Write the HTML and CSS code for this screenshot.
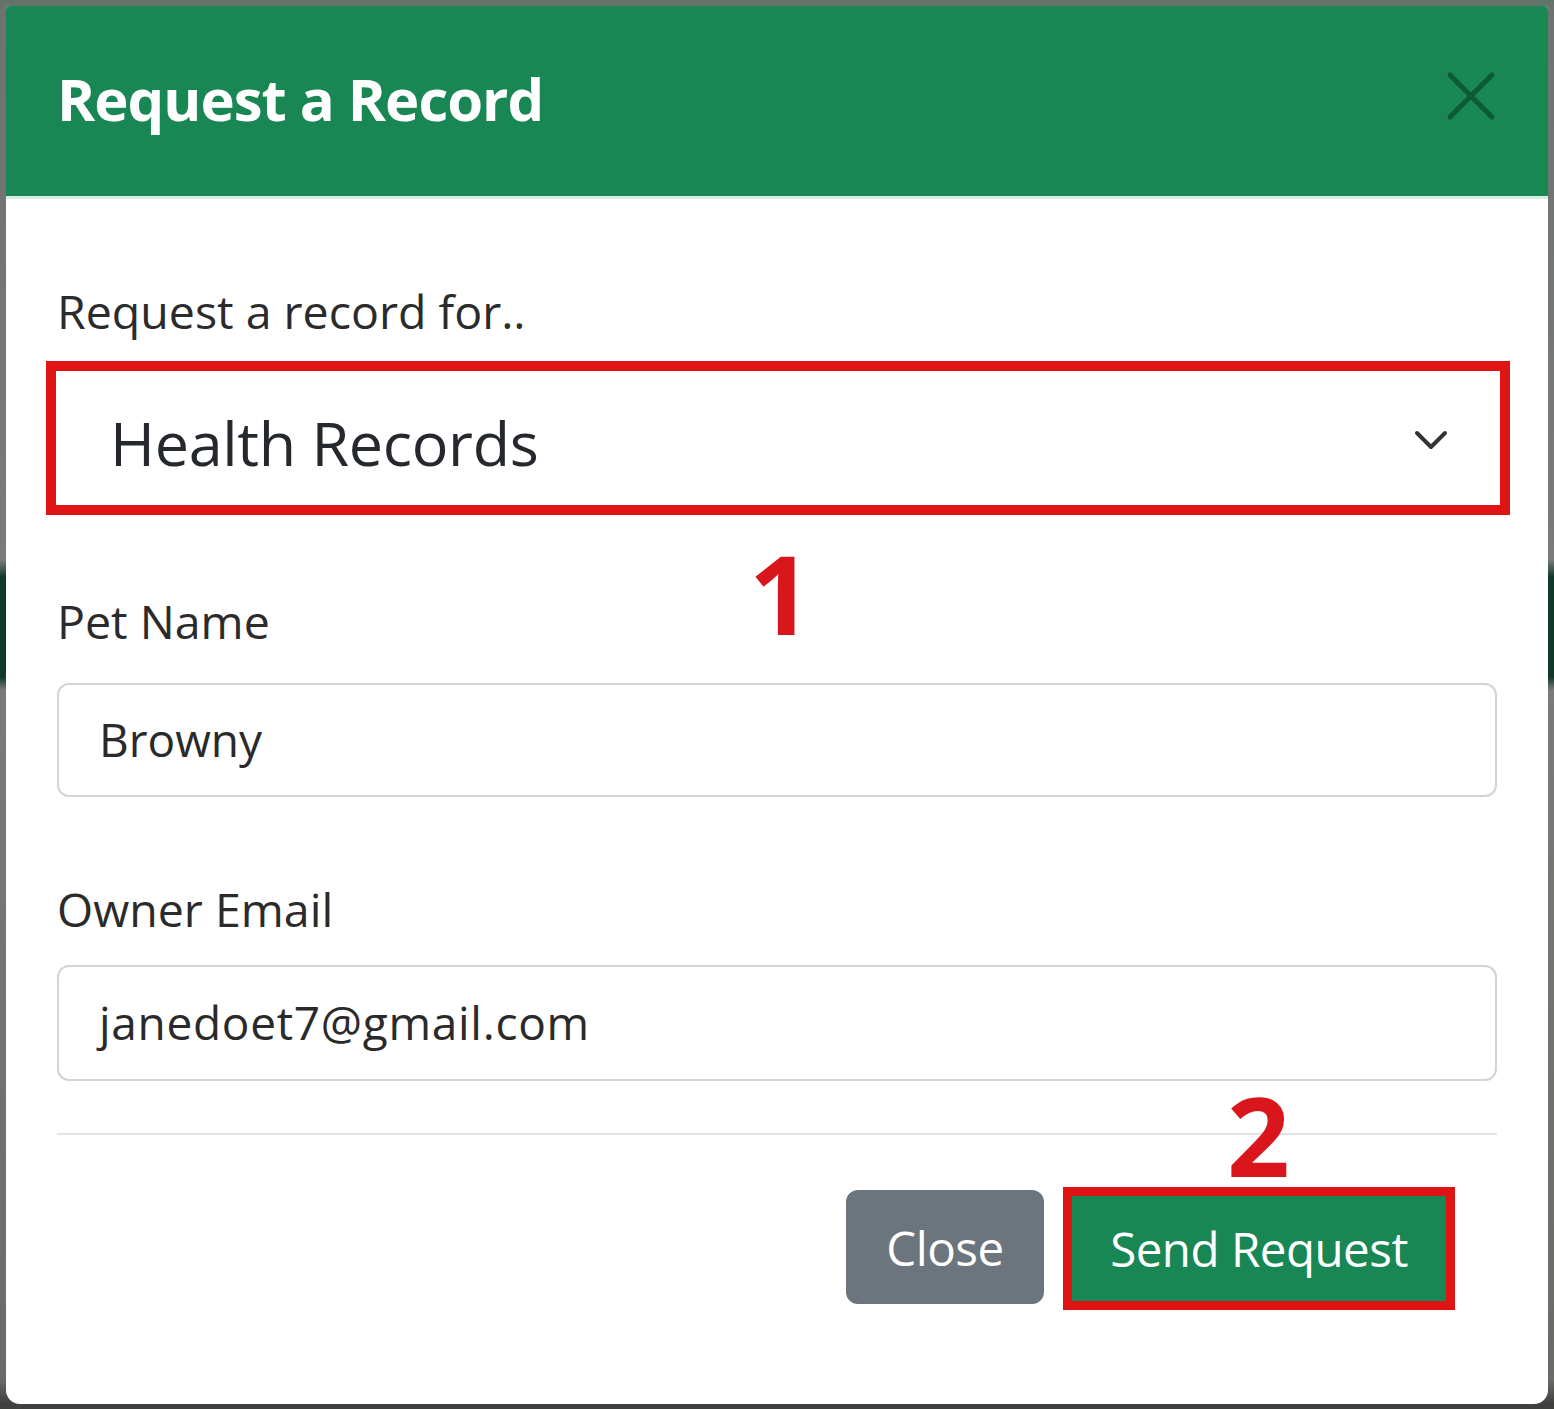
FILE: index.html
```html
<!DOCTYPE html>
<html lang="en">
<head>
<meta charset="utf-8">
<title>Request a Record</title>
<link rel="stylesheet" href="styles.css">
</head>
<body>
<div class="modal">
  <div class="modal-header">
    <h5 class="modal-title">Request a Record</h5>
    <button class="btn-close" aria-label="Close">
      <svg viewBox="0 0 50 50" width="50" height="50"><path d="M4 4 L46 46 M46 4 L4 46" stroke="currentColor" stroke-width="5" stroke-linecap="round" fill="none"/></svg>
    </button>
  </div>
  <div class="modal-body">
    <div class="field">
      <label class="form-label">Request a record for..</label>
      <div class="mark-box">
        <div class="form-select">
          <span>Health Records</span>
          <svg class="chevron" viewBox="0 0 34 22" width="34" height="22"><path d="M3 4 L17 18 L31 4" stroke="#333" stroke-width="4" stroke-linecap="round" stroke-linejoin="round" fill="none"/></svg>
        </div>
      </div>
      <span class="mark-num num-1">1</span>
    </div>
    <div class="field">
      <label class="form-label">Pet Name</label>
      <div class="form-control">Browny</div>
    </div>
    <div class="field">
      <label class="form-label">Owner Email</label>
      <div class="form-control email">janedoet7@gmail.com</div>
    </div>
  </div>
  <div class="modal-footer">
    <button class="btn btn-secondary">Close</button>
    <div class="mark-btn">
      <span class="mark-num num-2">2</span>
      <button class="btn btn-success">Send Request</button>
    </div>
  </div>
</div>
</body>
</html>
```
FILE: styles.css
```css
html, body {
  margin: 0;
  padding: 0;
}
body {
  width: 1554px;
  height: 1409px;
  overflow: hidden;
  background: linear-gradient(to bottom, #5f7468 0, #6e7270 8px, #7a7a7a 560px, #12382a 577px, #12382a 677px, #7a7a7a 690px, #6a6a66 1380px, #3f413f 1404px);
  font-family: "Open Sans", "Noto Sans", sans-serif;
  color: #212529;
  padding: 6px 6px 0 6px;
  box-sizing: border-box;
}
.modal {
  width: 1542px;
  height: 1398px;
  background: #fff;
  border-radius: 4px 4px 14px 14px;
  overflow: hidden;
  display: flex;
  flex-direction: column;
}
.modal-header {
  height: 186px;
  background: #198754;
  border-bottom: 3px solid #d6efe2;
  display: flex;
  align-items: center;
  justify-content: space-between;
  padding: 0 52px 4px 51px;
}
.modal-title {
  margin: 0;
  color: #fff;
  font-size: 58px;
  font-weight: 700;
  letter-spacing: -1px;
  line-height: 1.2;
}
.btn-close {
  border: 0;
  background: transparent;
  padding: 0;
  width: 50px;
  height: 50px;
  color: #0e5a36;
  margin-bottom: 6px;
}
.btn-close svg { display: block; }
.modal-body {
  padding: 80px 51px 0 51px;
  display: flex;
  flex-direction: column;
}
.field {
  position: relative;
  display: flex;
  flex-direction: column;
}
.form-label {
  font-size: 46.5px;
  line-height: 64px;
  color: #2b2b2b;
}
.mark-box {
  margin: 18px -13px 0 -11px;
  border: 10px solid #e01414;
  height: 134px;
}
.form-select {
  height: 134px;
  display: flex;
  align-items: center;
  justify-content: space-between;
  padding: 8px 52px 0 54px;
  box-sizing: border-box;
  font-size: 61px;
  color: #25292d;
  letter-spacing: -0.3px;
}
.chevron { display: block; margin-top: -4px; }
.mark-num {
  position: absolute;
  color: #d9161c;
  font-weight: 700;
  font-size: 110px;
  line-height: 1;
}
.num-1 {
  left: 692px;
  top: 258px;
}
.field:nth-child(2) { margin-top: 74px; }
.field:nth-child(3) { margin-top: 80px; }
.form-control {
  margin-top: 30px;
  height: 114px;
  border: 2px solid #d4d4d4;
  border-radius: 12px;
  box-sizing: border-box;
  display: flex;
  align-items: center;
  padding: 0 40px 2px 40px;
  font-size: 46px;
  color: #2a2a2a;
}
.form-control.email {
  margin-top: 24px;
  height: 116px;
  letter-spacing: 0.7px;
}
.modal-footer {
  margin: 52px 51px 0 51px;
  border-top: 2px solid #e3e3e3;
  display: flex;
  justify-content: flex-end;
  align-items: flex-start;
  padding: 52px 42px 0 0;
  gap: 19px;
}
.btn {
  border: 0;
  font-family: inherit;
  font-size: 47.5px;
  color: #fff;
  letter-spacing: -0.5px;
  padding: 0;
  height: 114px;
  box-sizing: border-box;
}
.btn-secondary {
  background: #6c757d;
  border-radius: 12px;
  width: 198px;
  margin-top: 3px;
}
.mark-btn {
  position: relative;
  border: 9px solid #e01414;
  width: 392px;
  height: 123px;
  box-sizing: border-box;
  display: flex;
}
.btn-success {
  background: #198754;
  width: 100%;
  height: 100%;
  border-radius: 0;
}
.num-2 {
  left: 155px;
  top: -117px;
}
```
